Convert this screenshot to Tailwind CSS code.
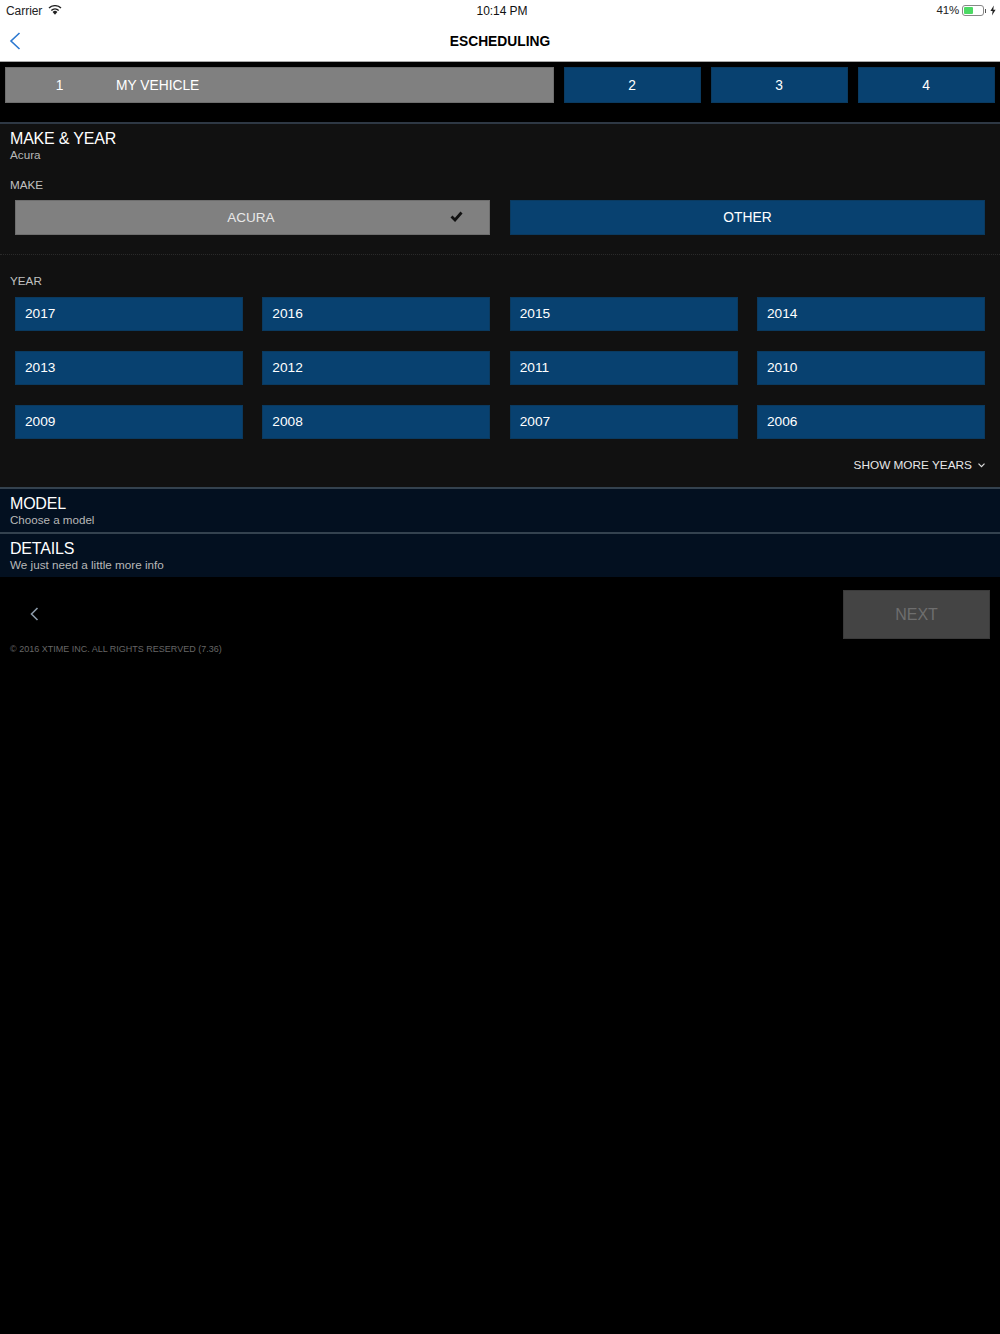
<!DOCTYPE html>
<html lang="en">
  <head>
    <meta charset="UTF-8" />
    <meta name="viewport" content="width=device-width, initial-scale=1.0" />
    <title>eScheduling</title>
    <script src="https://cdn.jsdelivr.net/npm/@tailwindcss/browser@4"></script>
  </head>
  <body class="bg-black font-['Liberation_Sans',Arial,sans-serif] antialiased">
    <div class="w-[1000px] h-[1334px] bg-black overflow-hidden">
      <!-- status bar -->
      <div class="h-5 bg-white flex items-center justify-between pl-[6px] pr-[4px] pt-[1px] text-[12px] text-[#222]">
        <div class="flex items-center gap-[6px] w-[200px]">
          <span class="tracking-[-0.05px]">Carrier</span>
          <svg width="14" height="10" viewBox="0 0 14 10" class="mb-[2px]">
            <path d="M7 9.8 L4.6 7 A3.4 3.4 0 0 1 9.4 7 Z" fill="#222" />
            <path d="M3.3 5.4 A5.4 5.4 0 0 1 10.7 5.4" fill="none" stroke="#222" stroke-width="1.4" />
            <path d="M1 3.1 A8.6 8.6 0 0 1 13 3.1" fill="none" stroke="#222" stroke-width="1.4" />
          </svg>
        </div>
        <span class="font-medium text-[#111] ml-[2px] tracking-[-0.05px]">10:14 PM</span>
        <div class="flex items-center justify-end w-[200px]">
          <span class="text-[11.5px] tracking-[-0.2px] mr-[3px]">41%</span>
          <div class="w-[22px] h-[11px] border border-[#888] rounded-[3px] p-[1px] bg-white">
            <div class="w-[9px] h-full bg-[#4cd964] rounded-[1px]"></div>
          </div>
          <div class="w-[1px] h-[4px] bg-[#555] ml-[1px]"></div>
          <svg width="6" height="11" viewBox="0 0 6 10" class="ml-[4px]"><path d="M3.8 0 L0.4 5.6 H2.6 L2 10 L5.6 4.2 H3.3 Z" fill="#222" /></svg>
        </div>
      </div>

      <!-- nav -->
      <div class="h-[42px] bg-white border-b border-[#a8a8a8] flex items-center relative">
        <svg width="12" height="18" viewBox="0 0 12 18" class="absolute left-[9px] top-[12px]">
          <path d="M10.5 1 L2 9 L10.5 17" fill="none" stroke="#2b78d0" stroke-width="1.6" />
        </svg>
        <div class="w-full text-center text-[13.8px] font-bold text-black pt-[4px]">ESCHEDULING</div>
      </div>

      <!-- steps -->
      <div class="flex gap-[10px] px-[5px] pt-[5px] h-[60px] text-[13.8px]">
        <div class="w-[549px] h-[36px] bg-[#808080] border border-[#6e6e6e] flex items-center text-white pt-[2px]">
          <span class="w-[107px] text-center">1</span>
          <span class="ml-[3px]">MY VEHICLE</span>
        </div>
        <div class="w-[137px] h-[36px] bg-[#084170] border border-[#0a3a60] flex items-center justify-center text-white pt-[2px] pr-[1px]">2</div>
        <div class="w-[137px] h-[36px] bg-[#084170] border border-[#0a3a60] flex items-center justify-center text-white pt-[2px] pr-[1px]">3</div>
        <div class="w-[137px] h-[36px] bg-[#084170] border border-[#0a3a60] flex items-center justify-center text-white pt-[2px] pr-[1px]">4</div>
      </div>

      <!-- make and year -->
      <div class="h-[365px] bg-[#111111] border-t-2 border-[#2e3844] text-white">
        <div class="px-[10px] pt-[6px]">
          <div class="text-[16px] leading-[18px] tracking-[-0.2px]">MAKE &amp; YEAR</div>
          <div class="text-[11.7px] leading-[14px] text-[#b8b8b8]">Acura</div>
          <div class="text-[11.7px] leading-[14px] mt-[16px] text-[#c0c0c0]">MAKE</div>
        </div>
        <div class="grid grid-cols-2 gap-x-5 px-[15px] mt-[8px]">
          <div class="h-[35px] bg-[#808080] border border-[#6e6e6e] flex items-center justify-center relative text-[13.5px] text-[#e8e8e8] pr-[3px] pt-[2px]">
            ACURA
            <svg width="13" height="11" viewBox="0 0 13 11" class="absolute right-[26px] top-[10px]">
              <path d="M1.5 5.5 L5 9 L11.5 1.5" fill="none" stroke="#111" stroke-width="2.8" />
            </svg>
          </div>
          <div class="h-[35px] bg-[#084170] border border-[#0a3a60] flex items-center justify-center text-[13.8px] pt-[2px]">OTHER</div>
        </div>
        <div class="mt-[19px] border-t border-dotted border-[#2a2a2a]"></div>
        <div class="px-[10px] mt-[19px] text-[11.7px] leading-[14px] text-[#c0c0c0]">YEAR</div>
        <div class="grid grid-cols-4 gap-x-[19.33px] gap-y-[20px] px-[15px] mt-[9px] text-[13.7px]">
          <div class="h-[34px] bg-[#084170] border border-[#0a3a60] flex items-center pl-[9px] pt-[1px]">2017</div>
          <div class="h-[34px] bg-[#084170] border border-[#0a3a60] flex items-center pl-[9px] pt-[1px]">2016</div>
          <div class="h-[34px] bg-[#084170] border border-[#0a3a60] flex items-center pl-[9px] pt-[1px]">2015</div>
          <div class="h-[34px] bg-[#084170] border border-[#0a3a60] flex items-center pl-[9px] pt-[1px]">2014</div>
          <div class="h-[34px] bg-[#084170] border border-[#0a3a60] flex items-center pl-[9px] pt-[1px]">2013</div>
          <div class="h-[34px] bg-[#084170] border border-[#0a3a60] flex items-center pl-[9px] pt-[1px]">2012</div>
          <div class="h-[34px] bg-[#084170] border border-[#0a3a60] flex items-center pl-[9px] pt-[1px]">2011</div>
          <div class="h-[34px] bg-[#084170] border border-[#0a3a60] flex items-center pl-[9px] pt-[1px]">2010</div>
          <div class="h-[34px] bg-[#084170] border border-[#0a3a60] flex items-center pl-[9px] pt-[1px]">2009</div>
          <div class="h-[34px] bg-[#084170] border border-[#0a3a60] flex items-center pl-[9px] pt-[1px]">2008</div>
          <div class="h-[34px] bg-[#084170] border border-[#0a3a60] flex items-center pl-[9px] pt-[1px]">2007</div>
          <div class="h-[34px] bg-[#084170] border border-[#0a3a60] flex items-center pl-[9px] pt-[1px]">2006</div>
        </div>
        <div class="flex items-center justify-end gap-[6px] pr-[15px] mt-[19px] text-[11.8px] leading-[14px] text-[#e8e8e8]">
          SHOW MORE YEARS
          <svg width="7" height="5" viewBox="0 0 7 5"><path d="M0.5 0.6 L3.5 3.6 L6.5 0.6" fill="none" stroke="#ddd" stroke-width="1.2" /></svg>
        </div>
      </div>

      <!-- collapsed sections -->
      <div class="h-[45px] bg-[#031020] border-t-2 border-[#34424f] px-[10px] pt-[6px] text-white">
        <div class="text-[16px] leading-[18px] tracking-[-0.2px]">MODEL</div>
        <div class="text-[11.6px] leading-[14px] text-[#b8b8b8]">Choose a model</div>
      </div>
      <div class="h-[45px] bg-[#031020] border-t-2 border-[#34424f] px-[10px] pt-[6px] text-white">
        <div class="text-[16px] leading-[18px] tracking-[-0.2px]">DETAILS</div>
        <div class="text-[11.7px] leading-[14px] text-[#b8b8b8]">We just need a little more info</div>
      </div>

      <!-- footer -->
      <div class="flex items-center justify-between h-[49px] mt-[13px] pl-[30px] pr-[10px]">
        <svg width="9" height="14" viewBox="0 0 9 14" class="-mt-[1px]"><path d="M7.5 1 L1.5 7 L7.5 13" fill="none" stroke="#8a99a8" stroke-width="1.6" /></svg>
        <div class="w-[147px] h-[49px] bg-[#444444] border border-[#3a3a3a] flex items-center justify-center text-[16px] text-[#6e6e6e]">NEXT</div>
      </div>
      <div class="px-[10px] mt-[4px] text-[9px] leading-[12px] text-[#666666]">© 2016 XTIME INC. ALL RIGHTS RESERVED (7.36)</div>
    </div>
  </body>
</html>
